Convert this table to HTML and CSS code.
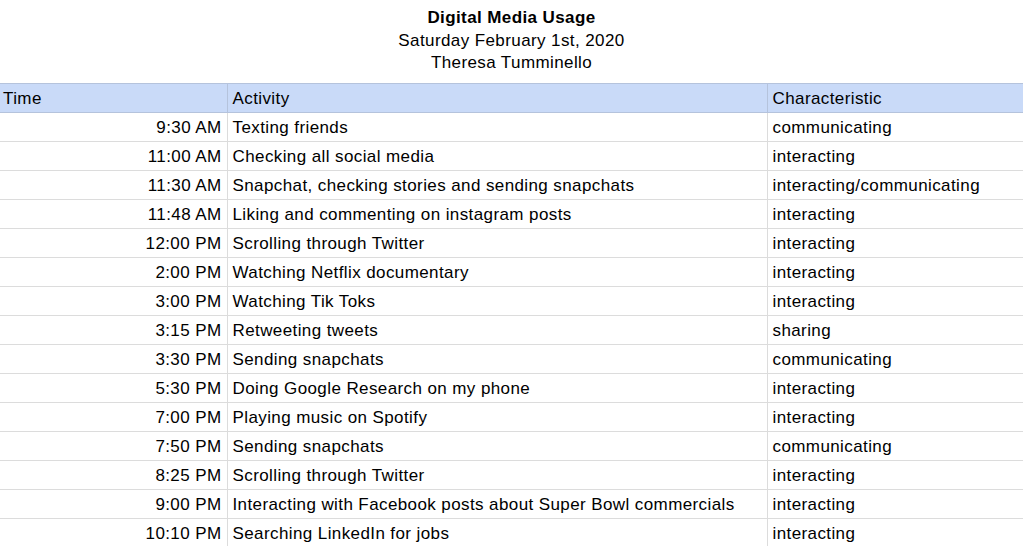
FILE: index.html
```html
<!DOCTYPE html>
<html>
<head>
<meta charset="utf-8">
<link rel="stylesheet" href="styles.css">
</head>
<body>
<div class="titles">
  <div class="title">Digital Media Usage</div>
  <div class="subtitle">Saturday February 1st, 2020</div>
  <div class="subtitle">Theresa Tumminello</div>
</div>
<table class="sheet">
  <colgroup>
    <col class="c-time">
    <col class="c-act">
    <col class="c-char">
  </colgroup>
  <thead>
    <tr><th>Time</th><th>Activity</th><th>Characteristic</th></tr>
  </thead>
  <tbody>
    <tr><td class="time">9:30 AM</td><td>Texting friends</td><td>communicating</td></tr>
    <tr><td class="time">11:00 AM</td><td>Checking all social media</td><td>interacting</td></tr>
    <tr><td class="time">11:30 AM</td><td>Snapchat, checking stories and sending snapchats</td><td>interacting/communicating</td></tr>
    <tr><td class="time">11:48 AM</td><td>Liking and commenting on instagram posts</td><td>interacting</td></tr>
    <tr><td class="time">12:00 PM</td><td>Scrolling through Twitter</td><td>interacting</td></tr>
    <tr><td class="time">2:00 PM</td><td>Watching Netflix documentary</td><td>interacting</td></tr>
    <tr><td class="time">3:00 PM</td><td>Watching Tik Toks</td><td>interacting</td></tr>
    <tr><td class="time">3:15 PM</td><td>Retweeting tweets</td><td>sharing</td></tr>
    <tr><td class="time">3:30 PM</td><td>Sending snapchats</td><td>communicating</td></tr>
    <tr><td class="time">5:30 PM</td><td>Doing Google Research on my phone</td><td>interacting</td></tr>
    <tr><td class="time">7:00 PM</td><td>Playing music on Spotify</td><td>interacting</td></tr>
    <tr><td class="time">7:50 PM</td><td>Sending snapchats</td><td>communicating</td></tr>
    <tr><td class="time">8:25 PM</td><td>Scrolling through Twitter</td><td>interacting</td></tr>
    <tr><td class="time">9:00 PM</td><td>Interacting with Facebook posts about Super Bowl commercials</td><td>interacting</td></tr>
    <tr><td class="time">10:10 PM</td><td>Searching LinkedIn for jobs</td><td>interacting</td></tr>
  </tbody>
</table>
</body>
</html>
```

FILE: styles.css
```css
html, body {
  margin: 0;
  padding: 0;
  background: #ffffff;
  color: #000000;
  font-family: "Liberation Sans", Arial, sans-serif;
  font-size: 17px;
  letter-spacing: 0.4px;
  overflow: hidden;
}

.titles {
  padding-top: 7px;
  text-align: center;
  line-height: 22.5px;
  height: 83px;
  box-sizing: border-box;
}

.title {
  font-weight: bold;
}

.sheet {
  width: 1023px;
  border-collapse: collapse;
  table-layout: fixed;
}

.c-time { width: 227px; }
.c-act { width: 540px; }
.c-char { width: 256px; }

.sheet th,
.sheet td {
  height: 26px;
  padding: 2px 5px 0 5px;
  text-align: left;
  font-weight: normal;
  white-space: nowrap;
  overflow: hidden;
  line-height: 20px;
  border: 1px solid #dcdcdc;
}

.sheet th {
  background: #c9daf8;
  border-color: #b5c3dc;
  height: 27px;
  padding-top: 1px;
  padding-left: 3px;
}

.sheet th:not(:first-child) {
  padding-left: 5px;
}

.sheet tr > :first-child { border-left: none; }
.sheet tr > :last-child { border-right: none; }

.sheet td.time {
  text-align: right;
}
```
